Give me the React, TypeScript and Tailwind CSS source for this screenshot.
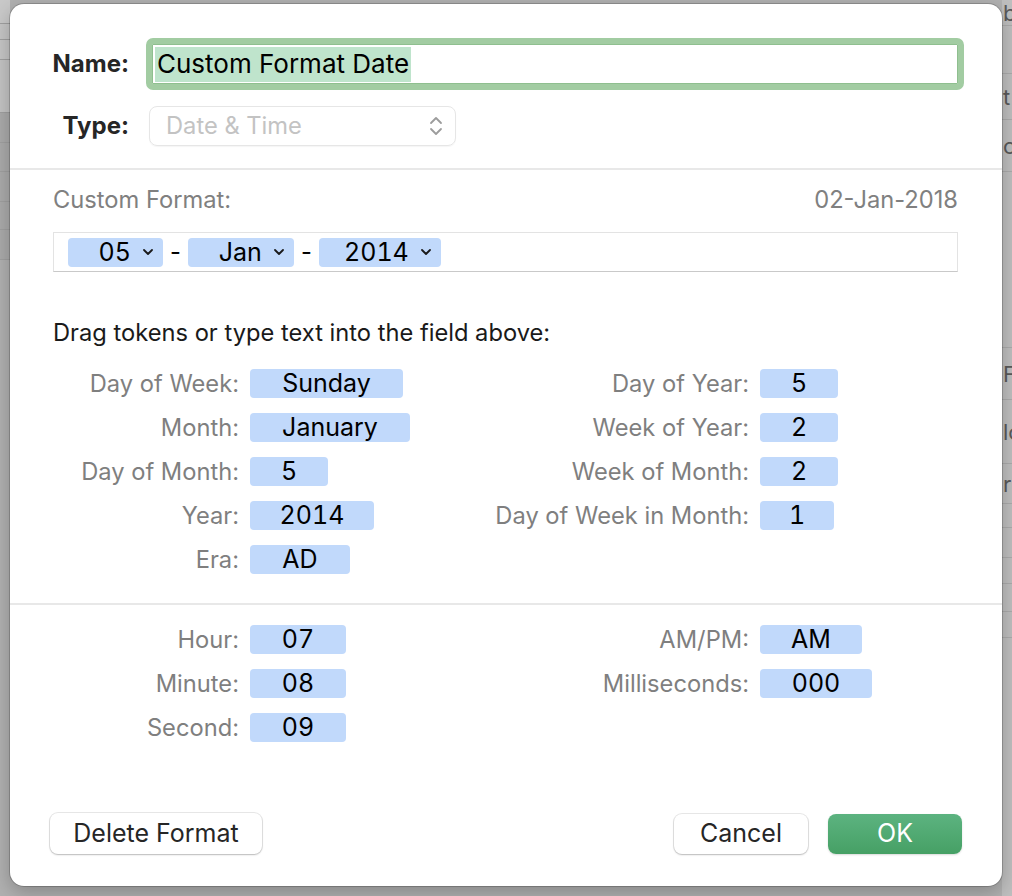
import React from "react";

type Tok = { label: string; value: string; w: string };

const dateLeft: Tok[] = [
  { label: "Day of Week:", value: "Sunday", w: "w-[153px]" },
  { label: "Month:", value: "January", w: "w-[160px]" },
  { label: "Day of Month:", value: "5", w: "w-[78px]" },
  { label: "Year:", value: "2014", w: "w-[124px]" },
  { label: "Era:", value: "AD", w: "w-[100px]" },
];
const dateRight: Tok[] = [
  { label: "Day of Year:", value: "5", w: "w-[78px]" },
  { label: "Week of Year:", value: "2", w: "w-[78px]" },
  { label: "Week of Month:", value: "2", w: "w-[78px]" },
  { label: "Day of Week in Month:", value: "1", w: "w-[74px]" },
];
const timeLeft: Tok[] = [
  { label: "Hour:", value: "07", w: "w-[96px]" },
  { label: "Minute:", value: "08", w: "w-[96px]" },
  { label: "Second:", value: "09", w: "w-[96px]" },
];
const timeRight: Tok[] = [
  { label: "AM/PM:", value: "AM", w: "w-[102px]" },
  { label: "Milliseconds:", value: "000", w: "w-[112px]" },
];

const leftStrip = [
  { h: "h-[24px]", c: "bg-[#c9c9c9]" },
  { h: "h-[16px]", c: "bg-[#c6c6c6]" },
  { h: "h-[20px]", c: "bg-[#c6c6c6]" },
  { h: "h-[53px]", c: "bg-[#c4c4c4]" },
  { h: "h-[30px]", c: "bg-[#ababab]" },
  { h: "h-[29px]", c: "bg-[#ababab]" },
  { h: "h-[30px]", c: "bg-[#ababab]" },
  { h: "h-[28px]", c: "bg-[#ababab]" },
  { h: "h-[30px]", c: "bg-[#ababab]" },
];

const rightStrip = [
  { h: "h-[26px]", t: "b" },
  { h: "h-[48px]", t: "" },
  { h: "h-[46px]", t: "t" },
  { h: "h-[52px]", t: "cu" },
  { h: "h-[176px]", t: "" },
  { h: "h-[52px]", t: "F" },
  { h: "h-[64px]", t: "lo" },
  { h: "h-[40px]", t: "r" },
  { h: "h-[24px]", t: "" },
  { h: "h-[30px]", t: "" },
  { h: "h-[26px]", t: "" },
  { h: "h-[28px]", t: "" },
  { h: "h-[26px]", t: "" },
];

const Token = ({ t }: { t: Tok }) => (
  <div
    className={`h-[29px] ${t.w} rounded-[4px] bg-[#c1d9fb] flex items-center justify-center text-black text-[25px] tabular-nums`}
  >
    {t.value}
  </div>
);

const Column = ({ rows, labelW }: { rows: Tok[]; labelW: string }) => (
  <div className="flex flex-col gap-[15px]">
    {rows.map((r, i) => (
      <div key={i} className="flex items-center h-[29px]">
        <div className={`${labelW} text-right text-[#7f7f7f]`}>{r.label}</div>
        <div className="ml-[11px]">
          <Token t={r} />
        </div>
      </div>
    ))}
  </div>
);

const Chevron = () => (
  <svg width="10" height="6" viewBox="0 0 10 6" fill="none">
    <path d="M1 1 L5 5 L9 1" stroke="#1a1a1a" strokeWidth="1.8" strokeLinecap="round" strokeLinejoin="round" />
  </svg>
);

const FormatToken = ({ text, w }: { text: string; w: string }) => (
  <div
    className={`h-[29px] ${w} rounded-[4px] bg-[#c1d9fb] flex items-center justify-end gap-[12px] pr-[10px] text-black text-[25px] tabular-nums`}
  >
    <span>{text}</span>
    <Chevron />
  </div>
);

const App: React.FC = () => {
  return (
    <div className="relative w-[1012px] h-[896px] overflow-hidden bg-[#b1b1b1] pl-[10px] pt-[4px] font-['Inter','Noto_Sans',sans-serif] text-[23.7px] leading-none">
      {/* spreadsheet behind the sheet */}
      <div className="absolute inset-0 flex justify-between">
        <div className="w-[10px] flex flex-col">
          {leftStrip.map((r, i) => (
            <div key={i} className={`${r.h} ${r.c} border-b border-[#a0a0a0]`} />
          ))}
        </div>
        <div className="w-[10px] flex flex-col bg-[#bfbfbf]">
          {rightStrip.map((r, i) => (
            <div
              key={i}
              className={`${r.h} border-b border-[#acacac] flex items-center pl-[1px] overflow-hidden whitespace-nowrap text-[#5a5a5a] text-[22px]`}
            >
              {r.t}
            </div>
          ))}
        </div>
      </div>

      {/* dialog */}
      <div className="relative w-[992px] h-[882px] rounded-[14px] bg-white shadow-[0_0_0_1px_rgba(0,0,0,0.18),0_6px_20px_rgba(0,0,0,0.25)] flex flex-col">
        {/* name + type */}
        <div className="pt-[34px] flex flex-col">
          <div className="flex items-center h-[52px]">
            <div className="w-[119px] text-right font-bold text-[#262626] text-[24px]">Name:</div>
            <div className="ml-[17px] mr-[38px] flex-1 h-[52px] rounded-[7px] border-[6px] border-[#a2cca2] bg-white flex items-center pl-[3px] shadow-[inset_0_0_0_1px_#8fbf8f]">
              <span className="bg-[#bfe4cc] h-[35px] flex items-center px-[2px] text-black text-[26px]">
                Custom Format Date
              </span>
            </div>
          </div>
          <div className="flex items-center h-[40px] mt-[16px]">
            <div className="w-[119px] text-right font-bold text-[#262626] text-[24px]">Type:</div>
            <div className="ml-[20px] w-[307px] h-[40px] rounded-[8px] border border-[#e6e6e6] shadow-[0_1px_1px_rgba(0,0,0,0.04)] flex items-center justify-between pl-[16px] pr-[11px] text-[#c3c3c3]">
              <span>Date &amp; Time</span>
              <svg width="16" height="22" viewBox="0 0 16 22" fill="none">
                <path d="M3 8 L8 3 L13 8" stroke="#9c9c9c" strokeWidth="1.8" strokeLinecap="round" strokeLinejoin="round" />
                <path d="M3 14 L8 19 L13 14" stroke="#9c9c9c" strokeWidth="1.8" strokeLinecap="round" strokeLinejoin="round" />
              </svg>
            </div>
          </div>
        </div>

        <div className="mt-[22px] h-[2px] bg-[#e8e8e8]" />

        {/* date section */}
        <div className="pl-[43px] pr-[44px] flex flex-col">
          <div className="h-[60px] flex items-center justify-between text-[#808080]">
            <span>Custom Format:</span>
            <span>02-Jan-2018</span>
          </div>
          <div className="mt-[2px] h-[40px] border border-[#e3e3e3] border-b-[#c9c9c9] flex items-center pl-[14px] text-black">
            <FormatToken text="05" w="w-[95px]" />
            <span className="mx-[7px]">-</span>
            <FormatToken text="Jan" w="w-[106px]" />
            <span className="mx-[7px]">-</span>
            <FormatToken text="2014" w="w-[122px]" />
          </div>
          <div className="mt-[41px] h-[40px] flex items-center text-[#1a1a1a]">
            Drag tokens or type text into the field above:
          </div>
          <div className="mt-[16px] flex">
            <div className="w-[427px]">
              <Column rows={dateLeft} labelW="w-[186px]" />
            </div>
            <Column rows={dateRight} labelW="w-[269px]" />
          </div>
        </div>

        <div className="mt-[29px] h-[2px] bg-[#e8e8e8]" />

        {/* time section */}
        <div className="pl-[43px] mt-[20px] flex">
          <div className="w-[427px]">
            <Column rows={timeLeft} labelW="w-[186px]" />
          </div>
          <Column rows={timeRight} labelW="w-[269px]" />
        </div>

        {/* buttons */}
        <div className="mt-[71px] pl-[40px] pr-[40px] flex items-center text-[25px]">
          <button className="h-[41px] w-[212px] rounded-[8px] bg-white text-[#262626] shadow-[0_0_0_1px_rgba(0,0,0,0.09),0_1px_2px_rgba(0,0,0,0.2)]">
            Delete Format
          </button>
          <div className="flex-1" />
          <button className="h-[40px] w-[134px] rounded-[8px] bg-white text-[#262626] shadow-[0_0_0_1px_rgba(0,0,0,0.09),0_1px_2px_rgba(0,0,0,0.2)]">
            Cancel
          </button>
          <button className="ml-[20px] h-[40px] w-[134px] rounded-[8px] bg-linear-to-b from-[#5cb380] to-[#46a065] text-white shadow-[0_1px_2px_rgba(0,0,0,0.15)]">
            OK
          </button>
        </div>
      </div>
    </div>
  );
};

export default App;
